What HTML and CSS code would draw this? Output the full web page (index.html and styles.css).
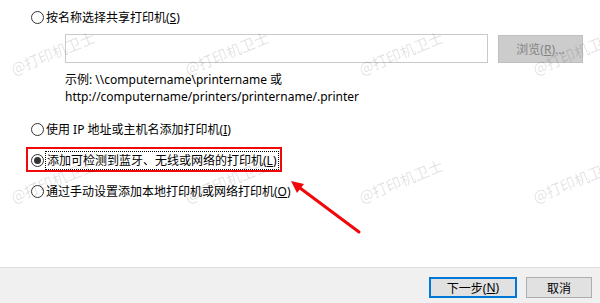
FILE: index.html
```html
<!DOCTYPE html>
<html lang="zh-CN">
<head>
<meta charset="utf-8">
<title>添加打印机</title>
<link rel="stylesheet" href="styles.css">
</head>
<body>
<div class="page">
  <main class="main">
    <div class="opt">
      <svg class="radio" viewBox="0 0 13 13"><circle cx="6.5" cy="6.5" r="6" fill="#fff" stroke="#333" stroke-width="1"/></svg>
      <span>按名称选择共享打印机(<u>S</u>)</span>
    </div>
    <div class="browse-row">
      <div class="textbox"></div>
      <div class="browse">浏览(<u>R</u>)...</div>
    </div>
    <div class="example">
      <div>示例: \\computername\printername 或</div>
      <div>http://computername/printers/printername/.printer</div>
    </div>
    <div class="opt opt2">
      <svg class="radio" viewBox="0 0 13 13"><circle cx="6.5" cy="6.5" r="6" fill="#fff" stroke="#333" stroke-width="1"/></svg>
      <span>使用 IP 地址或主机名添加打印机(<u>I</u>)</span>
    </div>
    <div class="marked">
      <svg class="radio" viewBox="0 0 13 13"><circle cx="6.5" cy="6.5" r="6" fill="#fff" stroke="#333" stroke-width="1"/><circle cx="6.5" cy="6.5" r="3.5" fill="#333"/></svg>
      <span class="focus">添加可检测到蓝牙、无线或网络的打印机(<u>L</u>)</span>
    </div>
    <div class="opt opt4">
      <svg class="radio" viewBox="0 0 13 13"><circle cx="6.5" cy="6.5" r="6" fill="#fff" stroke="#333" stroke-width="1"/></svg>
      <span>通过手动设置添加本地打印机或网络打印机(<u>O</u>)</span>
    </div>
  </main>
  <footer class="footer">
    <div class="btn btn-primary">下一步(<u>N</u>)</div>
    <div class="btn btn-cancel">取消</div>
  </footer>
</div>
<svg class="arrow" viewBox="0 0 600 303" width="600" height="303">
  <line x1="359" y1="232" x2="300" y2="188" stroke="#f0080a" stroke-width="3" stroke-linecap="round"/>
  <polygon points="291,181 304,184 297,193" fill="#f0080a"/>
</svg>
<div class="watermarks">
  <span>@打印机卫士</span><span>@打印机卫士</span><span>@打印机卫士</span><span>@打印机卫士</span>
  <span>@打印机卫士</span><span>@打印机卫士</span><span>@打印机卫士</span><span>@打印机卫士</span>
</div>
</body>
</html>
```

FILE: styles.css
```css
html, body {
  margin: 0;
  padding: 0;
}
body {
  width: 600px;
  height: 303px;
  overflow: hidden;
  position: relative;
  background: #fff;
  color: #000;
  font-family: "Noto Sans", "Noto Sans CJK SC", sans-serif;
  font-size: 12px;
}
u {
  text-decoration: underline;
  text-underline-offset: 1px;
}
.page {
  height: 303px;
  display: flex;
  flex-direction: column;
}
.main {
  flex: 1;
  padding: 7px 0 0 31px;
}
.opt {
  display: flex;
  align-items: center;
  height: 20px;
  gap: 2px;
  white-space: nowrap;
}
.radio {
  width: 13px;
  height: 13px;
  flex: none;
}
.browse-row {
  display: flex;
  gap: 10px;
  margin: 7px 0 0 34px;
}
.textbox {
  width: 423px;
  height: 29px;
  box-sizing: border-box;
  border: 1px solid #c9c9c9;
  background: #fff;
}
.browse {
  width: 85px;
  height: 28px;
  margin-top: 1px;
  box-sizing: border-box;
  border: 1px solid #bfbfbf;
  background: #cccccc;
  color: #838383;
  display: flex;
  align-items: center;
  justify-content: center;
}
.example {
  margin: 8px 0 0 34px;
  line-height: 17px;
  white-space: nowrap;
}
.opt2 {
  margin-top: 14px;
}
.marked {
  display: flex;
  align-items: center;
  width: fit-content;
  margin: 8px 0 0 -5px;
  border: 2px solid #f0080a;
  padding: 2px 1px 0 3px;
  white-space: nowrap;
}
.focus {
  margin-left: 1px;
  padding: 0 1px;
  line-height: 17px;
  border: 1px dotted #000;
}
.opt4 {
  margin-top: 9px;
}
.footer {
  height: 36px;
  box-sizing: border-box;
  border-top: 1px solid #dfdfdf;
  background: #f0f0f0;
  display: flex;
  justify-content: flex-end;
  align-items: flex-start;
  gap: 9px;
  padding: 9px 8px 0 0;
}
.btn {
  height: 21px;
  box-sizing: border-box;
  background: #e1e1e1;
  display: flex;
  align-items: center;
  justify-content: center;
}
.btn-primary {
  width: 88px;
  border: 2px solid #0078d7;
}
.btn-cancel {
  width: 66px;
  border: 1px solid #adadad;
}
.arrow {
  position: absolute;
  left: 0;
  top: 0;
  pointer-events: none;
}
.watermarks {
  position: absolute;
  left: -34px;
  top: -12px;
  display: grid;
  grid-template-columns: repeat(4, 174px);
  grid-auto-rows: 128px;
  place-items: center;
  pointer-events: none;
}
.watermarks span {
  font-family: "Noto Sans CJK SC", sans-serif;
  font-size: 15px;
  color: rgba(0, 0, 0, 0.13);
  transform: rotate(-22deg);
  white-space: nowrap;
}
```
